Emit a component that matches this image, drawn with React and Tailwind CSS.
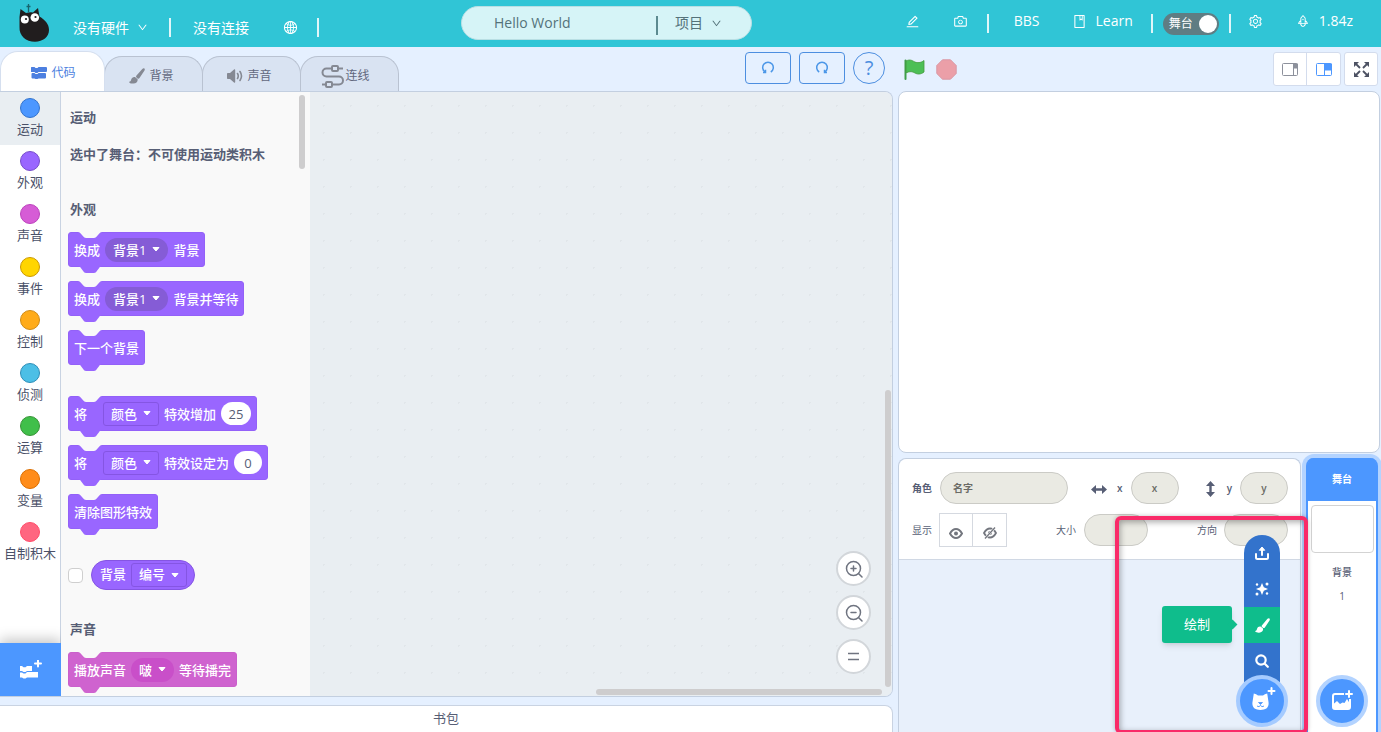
import React from "react";
import {
  AiOutlineBook,
  AiOutlineCamera,
  AiOutlineDown,
  AiOutlineEdit,
  AiOutlineGlobal,
  AiOutlineRocket,
  AiOutlineSetting,
} from "react-icons/ai";

const categories = [
  { name: "运动", color: "bg-[#4c97ff] border-[#3373cc]", active: true },
  { name: "外观", color: "bg-[#9966ff] border-[#774dcb]" },
  { name: "声音", color: "bg-[#d65cd6] border-[#bd42bd]" },
  { name: "事件", color: "bg-[#ffd500] border-[#cc9900]" },
  { name: "控制", color: "bg-[#ffab19] border-[#cf8b17]" },
  { name: "侦测", color: "bg-[#4cbfe6] border-[#2e8eb8]" },
  { name: "运算", color: "bg-[#40bf4a] border-[#389438]" },
  { name: "变量", color: "bg-[#ff8c1a] border-[#db6e00]" },
  { name: "自制积木", color: "bg-[#ff6680] border-[#ff4d6a]" },
];

const notchPath = "M0 0c2 0 3 1 4 2l4 4c1 1 2 2 4 2h12c2 0 3-1 4-2l4-4c1-1 2-2 4-2z";

function Block({ pink = false, children }) {
  return (
    <div
      className={
        "relative flex h-[35px] w-fit items-center gap-[5px] rounded-[3px] border px-[5px] text-[13px] leading-4 font-medium whitespace-nowrap text-white " +
        (pink ? "border-[#ca60cb] bg-[#cf63cf]" : "border-[#9361f8] bg-[#9966ff]")
      }
    >
      <svg className="absolute -top-px left-[9px] h-[6px] w-6 text-[#f9f9f9]" viewBox="0 0 36 8" preserveAspectRatio="none">
        <path d={notchPath} fill="currentColor" />
      </svg>
      <svg
        className={"absolute top-[33px] left-[9px] h-[7px] w-6 " + (pink ? "text-[#cf63cf]" : "text-[#9966ff]")}
        viewBox="0 0 36 8"
        preserveAspectRatio="none"
      >
        <path d={notchPath} fill="currentColor" />
      </svg>
      {children}
    </div>
  );
}

function Caret() {
  return (
    <svg className="h-[5px] w-2" viewBox="0 0 8 5">
      <path d="M1 .5h6L4 4z" fill="#fff" stroke="#fff" strokeLinejoin="round" />
    </svg>
  );
}

function RoundMenu({ pink = false, children }) {
  return (
    <button
      type="button"
      className={
        "flex h-6 items-center gap-1.5 rounded-full px-2 " + (pink ? "bg-[#c94fc9]" : "bg-[#855cd6]")
      }
    >
      {children}
      <Caret />
    </button>
  );
}

function SquareMenu({ children }) {
  return (
    <button type="button" className="flex h-6 items-center gap-1.5 rounded-[3px] border border-[#8555e3] px-[7px]">
      {children}
      <Caret />
    </button>
  );
}

function NumberField({ label, value, className }) {
  return (
    <input
      aria-label={label}
      defaultValue={value}
      className={"h-[23px] rounded-full bg-white text-center text-[13px] font-normal text-[#575e75] outline-none " + className}
    />
  );
}

function BlocksIcon({ className }) {
  return (
    <svg className={className} viewBox="0 0 16 12" fill="currentColor">
      <path d="M.5 0h3l1 1h2l1-1H15a1 1 0 0 1 1 1v3a1 1 0 0 1-1 1H7.500L6.500 6h-2l-1-1h-3a.5.5 0 0 1-.5-.5v-4A.5.5 0 0 1 .5 0z" />
      <path d="M1.500 6h2l1 1h2l1-1H14a1 1 0 0 1 1 1v3.500a1 1 0 0 1-1 1H7.500l-1 .5h-2l-1-.5h-2a1 1 0 0 1-1-1V7a1 1 0 0 1 1-1z" />
    </svg>
  );
}

function BrushIcon({ className }) {
  return (
    <svg className={className} viewBox="0 0 16 16" fill="currentColor">
      <path d="M15.400.5c.6.500.5 1.300.1 2.100l-5 7.500c-.5.700-1.300.8-2 .3l-1-.9c-.6-.6-.6-1.300 0-1.900L13.300.9c.7-.6 1.500-.9 2.100-.4z" />
      <path d="M6.300 9.200 8.600 11.300c.4 2-1.200 4.200-4.200 4.300-1.800.1-3.300-.3-4.100-1.200-.4-.5 0-.8.5-.9 1-.3 1-.9 1.400-2.100.6-1.700 2.200-2.800 4.100-2.200z" />
    </svg>
  );
}

function SoundIcon({ className }) {
  return (
    <svg className={className} viewBox="0 0 16 14">
      <path d="M0 5c0-.6.400-1 1-1h2l4-3.500c.6-.5 1.200-.2 1.200.5v12c0 .7-.6 1-1.200.5L3 10H1c-.6 0-1-.4-1-1z" fill="currentColor" />
      <path d="M10.500 4.500q1.500 2.500 0 5M13 2.500q3 4.500 0 9" fill="none" stroke="currentColor" strokeWidth="1.600" strokeLinecap="round" />
    </svg>
  );
}

function WireIcon({ className }) {
  return (
    <svg className={className} viewBox="0 0 24 23" fill="none" stroke="currentColor" strokeWidth="2">
      <path d="M11 3.500H5.500a4 4 0 0 0 0 8H18a4 4 0 0 1 0 8h-7M17 3.500h5M1 19.500h4" />
      <rect x="11" y="1" width="6" height="5" rx="1" />
      <rect x="5" y="17" width="6" height="5" rx="1" />
    </svg>
  );
}

function CatLogo() {
  return (
    <svg className="mb-1 h-10 w-8" viewBox="0 0 32 40">
      <path d="M10.500 10V2M8.500 4.500h4" stroke="#17656e" strokeWidth="1.300" />
      <path d="M2.500 7 8 11q4-1 7-.5L20 6l1.500 8.500C27 18 31 22 31 28c0 7-6 11.700-14 11.700C8 39.700 1 34 1.500 25V15z" fill="#211d1e" />
      <circle cx="6.800" cy="17.500" r="4" fill="#fff" />
      <circle cx="16.800" cy="15.500" r="4.300" fill="#fff" />
      <circle cx="8" cy="17" r="1.100" fill="#211d1e" />
      <circle cx="17.500" cy="15" r="1.100" fill="#211d1e" />
    </svg>
  );
}

function TurnIcon({ flip = false }) {
  return (
    <svg className={"mb-0.5 h-[14px] w-[14px] " + (flip ? "-scale-x-100" : "")} viewBox="0 0 14 14" fill="none" stroke="#4c97e8" strokeWidth="1.500">
      <path d="M4.200 12A5.300 5.300 0 1 1 9.800 12" />
      <path d="M4.500 9.800V12.400H2" />
    </svg>
  );
}

function ZoomIcon({ plus = false }) {
  return (
    <svg className="h-[18px] w-[18px]" viewBox="0 0 18 18" fill="none" stroke="#6f7480" strokeWidth="1.500" strokeLinecap="round">
      <circle cx="8.500" cy="8.500" r="7" />
      <path d="M13.500 13.500 17 17M6 8.500h5" />
      {plus && <path d="M8.500 6v5" />}
    </svg>
  );
}

function Plus({ x, y }) {
  return <path d={`M${x} ${y - 3}v6M${x - 3} ${y}h6`} stroke="currentColor" strokeWidth="2" strokeLinecap="round" />;
}

function Separator() {
  return <span className="h-[19px] w-[2px] shrink-0 bg-white/85" />;
}

function Header() {
  return (
    <header className="flex h-[47px] shrink-0 items-center bg-[#30c5d6] pr-7 pl-[18px] text-sm whitespace-nowrap text-white">
      <CatLogo />
      <div className="flex items-center pt-2">
        <button type="button" className="ml-[23px] flex items-center gap-2">
          没有硬件
          <AiOutlineDown className="h-[11px] w-[11px]" />
        </button>
        <span className="ml-[21px] flex"><Separator /></span>
        <button type="button" className="ml-[22px]">没有连接</button>
        <button type="button" aria-label="语言" className="ml-[34px]">
          <AiOutlineGlobal className="h-[15px] w-[15px]" />
        </button>
        <span className="ml-[19px] flex"><Separator /></span>
      </div>
      <div className="mb-px ml-[142px] flex h-[34px] w-[291px] items-center rounded-full border border-[#b9dfe4] bg-[#d6f4f7] text-[#54727a]">
        <input aria-label="项目名称" defaultValue="Hello World" className="ml-8 w-[162px] bg-transparent outline-none" />
        <span className="mt-1 h-[19px] w-[2px] bg-[#5c8a90]" />
        <button type="button" className="ml-[17px] flex items-center gap-2">
          项目
          <AiOutlineDown className="h-[11px] w-[11px]" />
        </button>
      </div>
      <div className="ml-auto flex items-center pb-[5px]">
        <button type="button" aria-label="编辑"><AiOutlineEdit className="h-[15px] w-[15px]" /></button>
        <button type="button" aria-label="截图" className="ml-[33px]"><AiOutlineCamera className="h-[15px] w-[15px]" /></button>
        <span className="mt-1 ml-[19px] flex"><Separator /></span>
        <a href="#bbs" className="ml-[25px]">BBS</a>
        <a href="#learn" className="ml-[33px] flex items-center gap-2">
          <AiOutlineBook className="h-[15px] w-[15px]" />
          Learn
        </a>
        <span className="mt-1 ml-[18px] flex"><Separator /></span>
        <label className="mt-[5px] ml-[10px] flex h-[22px] w-14 items-center justify-between rounded-full bg-[#5f7d83] pr-[2px] pl-1.5 text-[12px]">
          舞台
          <input type="checkbox" defaultChecked className="h-[18px] w-[18px] appearance-none rounded-full bg-white" />
        </label>
        <span className="mt-1 ml-[10px] flex"><Separator /></span>
        <button type="button" aria-label="设置" className="ml-[17px]"><AiOutlineSetting className="h-[15px] w-[15px]" /></button>
        <a href="#version" className="ml-[33px] flex items-center gap-[9px]">
          <AiOutlineRocket className="h-[14px] w-[14px]" />
          1.84z
        </a>
      </div>
    </header>
  );
}

function Tab({ active = false, icon, children }) {
  return (
    <button
      type="button"
      role="tab"
      aria-selected={active}
      className={
        "flex items-center justify-center gap-1 rounded-t-[18px] border border-b-0 text-[12px] " +
        (active
          ? "z-10 h-10 w-[105px] border-[#d5dfef] bg-white pt-0.5 pl-0.5 text-[#4c7fe0]"
          : "-ml-px h-[35px] w-[99px] border-[#b9c2d1] bg-[#d9e3f2] pt-1 pr-1 text-[#62687e]")
      }
    >
      {icon}
      {children}
    </button>
  );
}

function TabBar() {
  return (
    <div className="flex h-11 items-end">
      <div role="tablist" className="flex items-end">
        <Tab active icon={<BlocksIcon className="h-3 w-4" />}>代码</Tab>
        <Tab icon={<BrushIcon className="h-4 w-4 text-[#858993]" />}>背景</Tab>
        <Tab icon={<SoundIcon className="h-[14px] w-4 text-[#858993]" />}>声音</Tab>
        <Tab icon={<WireIcon className="-mr-1 -ml-1 h-[23px] w-6 text-[#858993]" />}>连线</Tab>
      </div>
      <div className="ml-auto flex gap-2 pr-2 pb-[7px]">
        <button type="button" aria-label="撤销" className="flex h-8 w-[46px] items-center justify-center rounded border border-[#4c8ee0]">
          <TurnIcon />
        </button>
        <button type="button" aria-label="重做" className="flex h-8 w-[46px] items-center justify-center rounded border border-[#4c8ee0]">
          <TurnIcon flip />
        </button>
        <button type="button" className="flex h-8 w-8 items-center justify-center rounded-full border border-[#4c8ee0] text-xl text-[#4c8ee0]">
          ?
        </button>
      </div>
    </div>
  );
}

function Categories() {
  return (
    <nav className="flex w-[61px] shrink-0 flex-col border-r border-[#c9d3e2] bg-white">
      <ul>
        {categories.map((c) => (
          <li key={c.name}>
            <button
              type="button"
              className={
                "flex h-[53px] w-full flex-col items-center gap-px pt-1.5 text-[13px] leading-5 whitespace-nowrap text-[#4a5068] " +
                (c.active ? "bg-[#e9eef2]" : "")
              }
            >
              <span className={"h-5 w-5 shrink-0 rounded-full border " + c.color} />
              {c.name}
            </button>
          </li>
        ))}
      </ul>
      <button
        type="button"
        aria-label="添加扩展"
        className="mt-auto flex h-[53px] w-[61px] items-center justify-center bg-[#4c97ff] text-white shadow-[0_-4px_12px_rgba(0,0,0,0.22)]"
      >
        <svg className="mr-0.5 h-[20px] w-[24px]" viewBox="0 0 24 20" fill="currentColor">
          <path d="M2 6h2l1.500 1.300h2L9 6h5v5H9L7.500 12h-2L4 11H2z" />
          <path d="M2 12.500h2l1.500 1h2l1.500-1.500h11v5.500H9L7.500 18.500h-2L4 17.500H2z" />
          <Plus x={20} y={3.5} />
        </svg>
      </button>
    </nav>
  );
}

function Palette() {
  return (
    <div className="relative w-[249px] shrink-0 overflow-hidden bg-[#f9f9f9] pt-[15px] pl-[7px] text-[#575e75]">
      <div className="absolute top-[3px] right-[5px] h-[74px] w-1.5 rounded-full bg-[#cecdce]" />
      <h2 className="pl-0.5 text-[13px] leading-5 font-semibold">运动</h2>
      <p className="mt-[17px] pl-0.5 text-[13px] leading-5 font-semibold whitespace-nowrap">选中了舞台：不可使用运动类积木</p>
      <h2 className="mt-[35px] pl-0.5 text-[13px] leading-5 font-semibold">外观</h2>
      <div className="mt-[13px] flex flex-col gap-[14px]">
        <Block>
          换成<RoundMenu>背景1</RoundMenu>背景
        </Block>
        <Block>
          换成<RoundMenu>背景1</RoundMenu>背景并等待
        </Block>
        <Block>下一个背景</Block>
      </div>
      <div className="mt-[31px] flex flex-col gap-[14px]">
        <Block>
          <span className="w-6">将</span>
          <SquareMenu>颜色</SquareMenu>特效增加
          <NumberField label="特效增加" value="25" className="w-[30px]" />
        </Block>
        <Block>
          <span className="w-6">将</span>
          <SquareMenu>颜色</SquareMenu>特效设定为
          <NumberField label="特效设定为" value="0" className="w-7" />
        </Block>
        <Block>清除图形特效</Block>
      </div>
      <div className="mt-[31px] flex items-center gap-2">
        <input type="checkbox" aria-label="显示背景编号" className="h-[15px] w-[15px] appearance-none rounded border border-[#cfcfcf] bg-white" />
        <div className="flex h-[30px] items-center gap-[5px] rounded-full border border-[#8555e3] bg-[#9966ff] pr-[7px] pl-2 text-[13px] font-medium text-white">
          背景<SquareMenu>编号</SquareMenu>
        </div>
      </div>
      <h2 className="mt-[29px] pl-0.5 text-[13px] leading-5 font-semibold">声音</h2>
      <div className="mt-[13px]">
        <Block pink>
          播放声音<RoundMenu pink>啵</RoundMenu>等待播完
        </Block>
      </div>
    </div>
  );
}

function Workspace() {
  const control =
    "flex h-[35px] w-[35px] items-center justify-center rounded-full border-2 border-[#d2d6da] bg-white";
  return (
    <div className="relative min-w-0 flex-1 bg-[#e9eef2] bg-[radial-gradient(#e1e6ea_1px,transparent_1px)] bg-[length:27px_27px]">
      <div className="absolute right-[21px] bottom-[22px] flex flex-col gap-[9px]">
        <button type="button" aria-label="放大" className={control}><ZoomIcon plus /></button>
        <button type="button" aria-label="缩小" className={control}><ZoomIcon /></button>
        <button type="button" aria-label="重置缩放" className={control}>
          <svg className="h-[9px] w-[11px]" viewBox="0 0 11 9" stroke="#6f7480" strokeWidth="1.500">
            <path d="M0 1.500h11M0 7.500h11" />
          </svg>
        </button>
      </div>
      <div className="absolute right-px bottom-[9px] h-[297px] w-1.5 rounded-full bg-[#cecdce]" />
      <div className="absolute right-[10px] bottom-px h-1.5 w-[286px] rounded-full bg-[#cecdce]" />
    </div>
  );
}

function StageControls() {
  const cell = "flex h-8 items-center justify-center";
  return (
    <div className="flex h-11 items-center pr-0.5 pl-1.5">
      <button type="button" aria-label="运行">
        <svg className="h-[21px] w-[21px]" viewBox="0 0 21 21">
          <path d="M1.500 1.500v18.500" stroke="#3f9e4b" strokeWidth="2" strokeLinecap="round" />
          <path d="M2 2c4-2 6-.5 8.500.8S17 4 20 1.500V13c-3 2.500-6.500 2.500-9 1s-5-2-9-.2z" fill="#4cbf56" stroke="#45993d" strokeWidth=".8" />
        </svg>
      </button>
      <button type="button" aria-label="停止" className="ml-[11px]">
        <svg className="h-[21px] w-[21px]" viewBox="0 0 21 21">
          <path d="M6.500.8h8L20.200 6.500v8l-5.700 5.700h-8L.8 14.500v-8z" fill="#eb9fa8" stroke="#d998a4" />
        </svg>
      </button>
      <div className="ml-auto flex rounded-[3px] border border-[#d3dced] bg-white">
        <button type="button" aria-label="小舞台" className={cell + " w-[33px] border-r border-[#d3dced]"}>
          <svg className="h-[13px] w-4" viewBox="0 0 16 13" fill="none" stroke="#8d919c">
            <rect x=".5" y=".5" width="15" height="12" rx="1" />
            <path d="M11.500 1v11.500" />
            <path d="M11.500 1h4v4h-4z" fill="#8d919c" />
          </svg>
        </button>
        <button type="button" aria-label="大舞台" className={cell + " w-[33px]"}>
          <svg className="h-[13px] w-4" viewBox="0 0 16 13" fill="none" stroke="#4c97ff">
            <rect x=".5" y=".5" width="15" height="12" rx="1" />
            <path d="M8.500 1v11.500" />
            <path d="M8.500 1h7v6h-7z" fill="#4c97ff" />
          </svg>
        </button>
      </div>
      <button type="button" aria-label="全屏" className="ml-[3px] flex h-[34px] w-[34px] items-center justify-center rounded-[3px] border border-[#d3dced] bg-white">
        <svg className="h-[15px] w-[15px]" viewBox="0 0 15 15" fill="#4d5263" stroke="#4d5263" strokeWidth="1.800">
          <path d="M2 2l4 4M13 2 9 6M2 13l4-4M13 13 9 9" />
          <path d="M0 0h5L0 5zM15 0v5l-5-5zM0 15v-5l5 5zM15 15h-5l5-5z" stroke="none" />
        </svg>
      </button>
    </div>
  );
}

function Field({ label, placeholder, className }) {
  return (
    <input
      aria-label={label}
      placeholder={placeholder}
      className={
        "h-8 rounded-full border border-[#cbcbc6] bg-[#eaeae3] text-[10px] font-semibold outline-none placeholder:text-[#6b6b66] " +
        className
      }
    />
  );
}

function SpriteInfo() {
  return (
    <div className="flex flex-col gap-[9px] rounded-t-lg border-b border-[#d0d8e4] bg-white pt-[13px] pr-3 pb-3 pl-[13px] text-[10px] whitespace-nowrap text-[#575e75]">
      <div className="flex items-center">
        <div className="flex items-center gap-2 font-bold">
          角色
          <Field label="名字" placeholder="名字" className="w-32 px-3" />
        </div>
        <div className="ml-[23px] flex items-center font-semibold">
          <svg className="mt-0.5 mr-[10px] h-[9px] w-4" viewBox="0 0 16 9" fill="#575e75">
            <path d="M0 4.500 5 0v3.300h6V0l5 4.500L11 9V5.700H5V9z" />
          </svg>
          x
          <Field label="x" placeholder="x" className="ml-2 w-12 text-center" />
        </div>
        <div className="ml-auto flex items-center font-semibold">
          <svg className="mt-0.5 mr-3 h-4 w-[9px]" viewBox="0 0 9 16" fill="#575e75">
            <path d="M4.500 0 9 5H5.700v6H9l-4.500 5L0 11h3.300V5H0z" />
          </svg>
          y
          <Field label="y" placeholder="y" className="ml-2 w-12 text-center" />
        </div>
      </div>
      <div className="flex items-center justify-between">
        <div className="flex items-center gap-[7px]">
          显示
          <div className="flex h-[34px] border border-[#d5d9e0] text-[#73767e]">
            <button type="button" aria-label="显示" className="flex w-[33px] items-center justify-center border-r border-[#d5d9e0] pt-1.5">
              <svg className="h-[11px] w-[14px]" viewBox="0 0 14 11" fill="none" stroke="currentColor">
                <path d="M1 5.500Q3.500 1 7 1t6 4.500Q10.500 10 7 10T1 5.500z" strokeWidth="2" />
                <circle cx="7" cy="5.500" r="2" fill="currentColor" stroke="none" />
              </svg>
            </button>
            <button type="button" aria-label="隐藏" className="flex w-[33px] items-center justify-center pt-1.5">
              <svg className="h-[12px] w-[14px]" viewBox="0 0 14 12" fill="none" stroke="currentColor">
                <path d="M1 6Q3.500 1.500 7 1.500T13 6q-2.500 4.500-6 4.500T1 6z" strokeWidth="1.800" />
                <circle cx="7" cy="6" r="2" fill="currentColor" stroke="none" />
                <path d="M2 11.500 12 .5" stroke="#fff" strokeWidth="2.500" />
                <path d="M2 11.500 12 .5" strokeWidth="1.300" />
              </svg>
            </button>
          </div>
        </div>
        <div className="flex items-center gap-2">
          大小
          <Field label="大小" className="w-16" />
        </div>
        <div className="flex items-center gap-[7px]">
          方向
          <Field label="方向" className="w-16" />
        </div>
      </div>
    </div>
  );
}

function AddSpriteMenu() {
  const item = "flex h-9 w-9 items-center justify-center";
  return (
    <div className="absolute right-3 bottom-[5px] flex flex-col items-center text-white">
      <div className="-mb-2 rounded-t-full bg-[#3373cc] pb-1">
        <button type="button" aria-label="上传" className={item}>
          <svg className="h-[14px] w-[14px]" viewBox="0 0 14 14" fill="none" stroke="currentColor" strokeWidth="2" strokeLinecap="round" strokeLinejoin="round">
            <path d="M1 8v3.500Q1 13 2.500 13h9q1.500 0 1.500-1.500V8M7 9V3" />
            <path d="M4.500 4 7 1l2.500 3z" fill="currentColor" strokeWidth="1" />
          </svg>
        </button>
        <button type="button" aria-label="随机" className={item}>
          <svg className="h-[14px] w-[14px]" viewBox="0 0 14 14" fill="currentColor">
            <path d="M7 1 8.800 5.200 13 7 8.800 8.800 7 13 5.200 8.800 1 7l4.200-1.800z" />
            <circle cx="2" cy="2.500" r="1.200" />
            <circle cx="12" cy="2" r="1.500" />
            <circle cx="2" cy="12" r="1.500" />
            <circle cx="12" cy="11.500" r="1.200" />
          </svg>
        </button>
        <div className="relative">
          <button type="button" aria-label="绘制" className={item + " bg-[#0fbd8c]"}>
            <BrushIcon className="h-[15px] w-[15px]" />
          </button>
          <div role="tooltip" className="absolute -top-px right-12 flex h-[37px] w-[70px] items-center justify-center rounded-[3px] bg-[#0fbd8c] text-[13px] shadow-md">
            绘制
            <span className="absolute -right-1 h-[7px] w-[7px] rotate-45 bg-[#0fbd8c]" />
          </div>
        </div>
        <button type="button" aria-label="选择一个角色" className={item}>
          <svg className="h-[14px] w-[14px]" viewBox="0 0 14 14" fill="none" stroke="currentColor" strokeWidth="2.200" strokeLinecap="round">
            <circle cx="6" cy="6" r="4.700" />
            <path d="m9.500 9.500 3.300 3.300" />
          </svg>
        </button>
      </div>
      <button type="button" aria-label="添加角色" className="z-10 flex h-[52px] w-[52px] items-center justify-center rounded-full border-4 border-[#a5cbff] bg-[#4c97ff]">
        <svg className="mb-1 ml-1 h-6 w-6" viewBox="0 0 24 24" fill="currentColor">
          <path d="M1.800 6.500q2.500.3 4.200 2h5q1.700-1.700 4.200-2l1.300 8.500c.8 5.500-2.500 8-8 8s-8.800-2.500-8-8z" />
          <path d="M6.500 15.500h4L8.500 17.500zM5 19q2 1.500 3.500-.5 1.500 2 3.500.5" fill="#4c97ff" stroke="#4c97ff" strokeWidth=".8" />
          <Plus x={19.5} y={4} />
        </svg>
      </button>
    </div>
  );
}

function StageSelector() {
  return (
    <aside className="flex w-[72px] shrink-0 flex-col items-center rounded-t-lg border-x-2 border-[#4c97ff] bg-white text-[10px] text-[#575e75] ring-4 ring-[#b3d3ff]">
      <h2 className="flex h-[43px] w-full items-center justify-center rounded-t-[5px] bg-[#4c97ff] font-bold text-white">舞台</h2>
      <div className="mt-1 h-12 w-[63px] rounded border border-[#d3d3d3] bg-white" />
      <p className="mt-[11px] leading-4 font-medium">背景</p>
      <p className="mt-2 leading-4">1</p>
      <button type="button" aria-label="添加背景" className="mt-auto mb-[5px] flex h-[52px] w-[52px] items-center justify-center rounded-full border-4 border-[#b3d3ff] bg-[#4c97ff] text-white">
        <svg className="h-[22px] w-[22px]" viewBox="0 0 22 22" fill="none" stroke="currentColor" strokeWidth="2">
          <path d="M13 4H4Q2 4 2 6v11q0 2 2 2h13q2 0 2-2V9" />
          <path d="m2.500 14 3.500-3 3 3 2.500-1.500 2 .5 2.500-4 2.500 4V18H3z" fill="currentColor" stroke="none" />
          <Plus x={18} y={4} />
        </svg>
      </button>
    </aside>
  );
}

function TargetPane() {
  return (
    <div className="relative mt-[5px] flex min-h-0 flex-1 gap-[5px] pr-0.5">
      <section className="relative flex-1 rounded-t-lg border border-b-0 border-[#c3cfe0] bg-[#e8f0fb]">
        <SpriteInfo />
        <AddSpriteMenu />
      </section>
      <StageSelector />
      <div className="pointer-events-none absolute top-[58px] right-[72px] -bottom-0.5 left-[217px] rounded-md border-4 border-[#f92a68] shadow-[inset_1px_2px_6px_rgba(0,0,0,0.35),0_0_4px_rgba(0,0,0,0.25)]" />
    </div>
  );
}

export default function App() {
  return (
    <div className="flex h-screen flex-col overflow-hidden bg-[#e5f0ff] font-['Open_Sans','Noto_Sans_CJK_SC',sans-serif]">
      <Header />
      <main className="flex min-h-0 flex-1 gap-[5px] pr-px">
        <section className="flex min-w-0 flex-1 flex-col">
          <TabBar />
          <div className="flex min-h-0 flex-1 overflow-hidden rounded-r-lg border border-l-0 border-[#c3cfe0]">
            <Categories />
            <Palette />
            <Workspace />
          </div>
          <button type="button" className="mt-2 h-[27px] shrink-0 rounded-tr-lg border-t border-r border-[#c9d3e2] bg-white text-[13px] text-[#575e75]">
            书包
          </button>
        </section>
        <section className="flex w-[482px] shrink-0 flex-col">
          <StageControls />
          <div className="aspect-[482/362] w-full shrink-0 rounded-lg border border-[#c3cfe0] bg-white" />
          <TargetPane />
        </section>
      </main>
    </div>
  );
}
